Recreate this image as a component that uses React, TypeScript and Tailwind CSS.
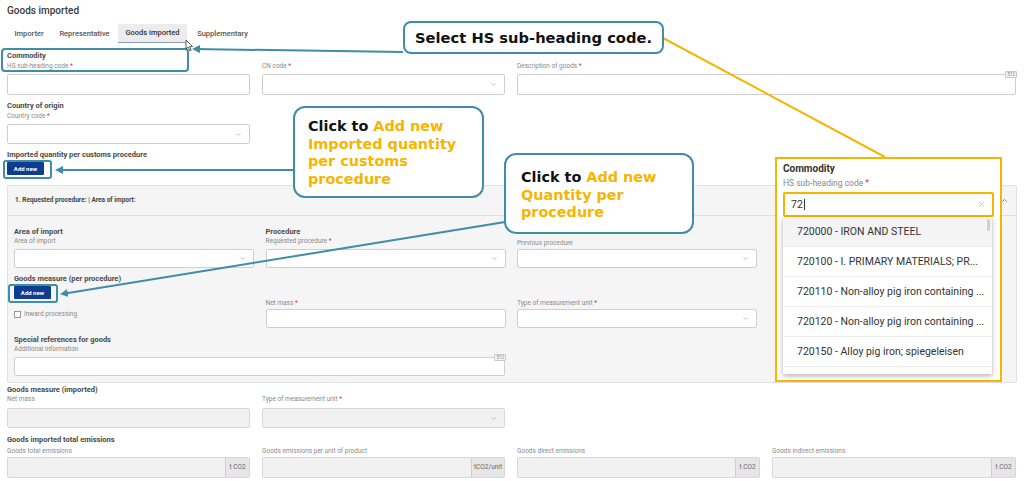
import React from "react";
import { ChevronDown, ChevronUp, X } from "lucide-react";

const Req = () => <span className="text-[#d43c3c]"> *</span>;

const Label = ({ children, req }: { children: React.ReactNode; req?: boolean }) => (
  <div className="h-[8px] text-[6.5px] leading-[8px] text-[#8a8a8a] whitespace-nowrap">
    {children}
    {req && <Req />}
  </div>
);

const Heading = ({ children }: { children: React.ReactNode }) => (
  <div className="h-[8px] text-[7.5px] leading-[8px] font-bold text-[#4a4a4a] whitespace-nowrap">{children}</div>
);

const Input = ({ h = "h-[21px]", disabled, badge }: { h?: string; disabled?: boolean; badge?: boolean }) => (
  <div
    className={`relative ${h} w-full rounded-[2px] border ${
      disabled ? "border-[#d8d8d8] bg-[#f1f1f1]" : "border-[#cfcfcf] bg-white"
    }`}
  >
    {badge && (
      <div className="absolute right-[-2px] top-[-4px] h-[7px] px-[1px] rounded-[1px] border border-[#c9c9c9] bg-[#f2f2f2] text-[4.5px] leading-[5px] text-[#888]">
        512
      </div>
    )}
  </div>
);

const Select = ({ h = "h-[21px]", disabled }: { h?: string; disabled?: boolean }) => (
  <div
    className={`flex ${h} w-full items-center justify-end rounded-[2px] border pr-[7px] ${
      disabled ? "border-[#d8d8d8] bg-[#f1f1f1]" : "border-[#cfcfcf] bg-white"
    }`}
  >
    <ChevronDown size={7} strokeWidth={2} color="#9a9a9a" />
  </div>
);

const Addon = ({ unit, w }: { unit: string; w: string }) => (
  <div className="flex h-[21px] w-full rounded-[2px] border border-[#d8d8d8] bg-[#f1f1f1]">
    <div className="flex-1" />
    <div
      className={`${w} flex items-center justify-center border-l border-[#cfcfcf] bg-[#e6e6e6] text-[6.5px] text-[#666] whitespace-nowrap`}
    >
      {unit}
    </div>
  </div>
);

const AddNew = () => (
  <div className="flex h-[13px] w-[37px] items-center justify-center rounded-[1px] bg-[#0d3d8f] text-[6px] font-bold text-white">
    Add new
  </div>
);

const Callout = ({ className, children }: { className: string; children: React.ReactNode }) => (
  <div
    className={`absolute border-2 border-[#3d8ea6] bg-white font-['DejaVu_Sans',sans-serif] font-bold text-[#111] ${className}`}
  >
    {children}
  </div>
);

const Y = ({ children }: { children: React.ReactNode }) => <span className="text-[#f7b500]">{children}</span>;

export default function App() {
  const items = [
    "720000 - IRON AND STEEL",
    "720100 - I. PRIMARY MATERIALS; PR...",
    "720110 - Non-alloy pig iron containing ...",
    "720120 - Non-alloy pig iron containing ...",
    "720150 - Alloy pig iron; spiegeleisen",
  ];
  return (
    <div className="relative h-[481px] w-[1024px] overflow-hidden bg-white font-['Roboto',sans-serif]">
      <div className="px-[7px] pt-[4px]">
        <div className="h-[12px] text-[10px] leading-[13px] font-medium text-[#3a3a3a]">Goods imported</div>

        {/* tabs */}
        <div className="mt-[8px] flex h-[19px] text-[7.5px] font-medium text-[#555]">
          <div className="flex w-[44px] items-center justify-center">Importer</div>
          <div className="flex w-[67px] items-center justify-center">Representative</div>
          <div className="flex w-[69px] items-center justify-center border-b border-[#8aa0b8] bg-[#ececec] text-[#333]">
            Goods imported
          </div>
          <div className="flex w-[71px] items-center justify-center">Supplementary</div>
        </div>

        {/* commodity */}
        <div className="mt-[9px]">
          <Heading>Commodity</Heading>
          <div className="mt-[2px] grid grid-cols-[243px_243px_243px_244px] gap-x-[12px]">
            <div>
              <Label req>HS sub-heading code</Label>
              <div className="mt-[4px]">
                <Input />
              </div>
            </div>
            <div>
              <Label req>CN code</Label>
              <div className="mt-[4px]">
                <Select />
              </div>
            </div>
            <div className="col-span-2">
              <Label req>Description of goods</Label>
              <div className="mt-[4px]">
                <Input badge />
              </div>
            </div>
          </div>
        </div>

        {/* country */}
        <div className="mt-[7px] w-[243px]">
          <Heading>Country of origin</Heading>
          <div className="mt-[2px]">
            <Label req>Country code</Label>
          </div>
          <div className="mt-[4px]">
            <Select h="h-[20px]" />
          </div>
        </div>

        <div className="mt-[7px]">
          <Heading>Imported quantity per customs procedure</Heading>
          <div className="mt-[3px]">
            <AddNew />
          </div>
        </div>

        {/* panel */}
        <div className="mt-[10px] w-[1010px] rounded-[2px] border border-[#e2e2e2] bg-[#f5f5f5]">
          <div className="flex h-[30px] items-center justify-between border-b border-[#dedede] pl-[7px] pr-[7px]">
            <div className="text-[6.5px] font-bold text-[#444]">1. Requested procedure: | Area of import:</div>
            <ChevronUp size={9} strokeWidth={2} color="#666" />
          </div>
          <div className="px-[6px] pb-[6px]">
            <div className="mt-[12px] grid grid-cols-[240px_240px_240px] gap-x-[11.5px]">
              <div>
                <Heading>Area of import</Heading>
                <div className="mt-[1px]">
                  <Label>Area of import</Label>
                </div>
                <div className="mt-[4px]">
                  <Select h="h-[19px]" />
                </div>
              </div>
              <div>
                <Heading>Procedure</Heading>
                <div className="mt-[1px]">
                  <Label req>Requested procedure</Label>
                </div>
                <div className="mt-[4px]">
                  <Select h="h-[19px]" />
                </div>
              </div>
              <div>
                <div className="h-[8px]" />
                <div className="mt-[3px]">
                  <Label>Previous procedure</Label>
                </div>
                <div className="mt-[2px]">
                  <Select h="h-[19px]" />
                </div>
              </div>
            </div>

            <div className="mt-[7px]">
              <Heading>Goods measure (per procedure)</Heading>
              <div className="mt-[3px]">
                <AddNew />
              </div>
            </div>

            <div className="grid grid-cols-[240px_240px_240px] gap-x-[11.5px]">
              <div className="mt-[12px] flex items-start gap-[3px]">
                <div className="h-[7px] w-[7px] border border-[#9a9a9a] bg-white" />
                <div className="text-[6.5px] leading-[7px] text-[#8a8a8a]">Inward processing</div>
              </div>
              <div>
                <Label req>Net mass</Label>
                <div className="mt-[2px]">
                  <Input h="h-[19px]" />
                </div>
              </div>
              <div>
                <Label req>Type of measurement unit</Label>
                <div className="mt-[2px]">
                  <Select h="h-[19px]" />
                </div>
              </div>
            </div>

            <div className="mt-[8px] w-[491px]">
              <Heading>Special references for goods</Heading>
              <div className="mt-[1px]">
                <Label>Additional information</Label>
              </div>
              <div className="mt-[4px]">
                <Input h="h-[19px]" badge />
              </div>
            </div>
          </div>
        </div>

        {/* goods measure imported */}
        <div className="mt-[3px]">
          <Heading>Goods measure (imported)</Heading>
          <div className="mt-[1px] grid grid-cols-[243px_243px] gap-x-[12px]">
            <div>
              <Label>Net mass</Label>
              <div className="mt-[5px]">
                <Input h="h-[20px]" disabled />
              </div>
            </div>
            <div>
              <Label req>Type of measurement unit</Label>
              <div className="mt-[5px]">
                <Select h="h-[20px]" disabled />
              </div>
            </div>
          </div>
        </div>

        <div className="mt-[8px]">
          <Heading>Goods imported total emissions</Heading>
          <div className="mt-[3px] grid grid-cols-[243px_243px_243px_244px] gap-x-[12px]">
            <div>
              <Label>Goods total emissions</Label>
              <div className="mt-[2px]">
                <Addon unit="t CO2" w="w-[24px]" />
              </div>
            </div>
            <div>
              <Label>Goods emissions per unit of product</Label>
              <div className="mt-[2px]">
                <Addon unit="tCO2/unit" w="w-[33px]" />
              </div>
            </div>
            <div>
              <Label>Goods direct emissions</Label>
              <div className="mt-[2px]">
                <Addon unit="t CO2" w="w-[24px]" />
              </div>
            </div>
            <div>
              <Label>Goods indirect emissions</Label>
              <div className="mt-[2px]">
                <Addon unit="t CO2" w="w-[24px]" />
              </div>
            </div>
          </div>
        </div>
      </div>

      {/* highlight boxes */}
      <div className="absolute left-[1px] top-[48px] h-[24px] w-[188px] rounded-[4px] border-2 border-[#3d8ea6]" />
      <div className="absolute left-[3px] top-[160px] h-[19px] w-[49px] rounded-[3px] border-2 border-[#3d8ea6]" />
      <div className="absolute left-[8px] top-[284px] h-[19px] w-[50px] rounded-[3px] border-2 border-[#3d8ea6]" />

      {/* cursor */}
      <svg className="absolute left-[185px] top-[39px]" width="9" height="13" viewBox="0 0 9 13">
        <path d="M1 1 L1 10 L3.2 8 L4.8 11.8 L6.2 11.2 L4.7 7.6 L7.6 7.6 Z" fill="#fff" stroke="#333" strokeWidth="0.8" />
      </svg>

      {/* lines */}
      <svg className="pointer-events-none absolute left-0 top-0" width="1024" height="481">
        <defs>
          <marker id="ah" markerWidth="8" markerHeight="8" refX="6" refY="4" orient="auto" markerUnits="userSpaceOnUse">
            <path d="M0 0 L8 4 L0 8 Z" fill="#3d8ea6" />
          </marker>
        </defs>
        <line x1="403" y1="52" x2="194" y2="49" stroke="#3d8ea6" strokeWidth="2" markerEnd="url(#ah)" />
        <line x1="293" y1="170" x2="57" y2="170" stroke="#3d8ea6" strokeWidth="2" markerEnd="url(#ah)" />
        <line x1="505" y1="222" x2="62" y2="294" stroke="#3d8ea6" strokeWidth="2" markerEnd="url(#ah)" />
        <line x1="663" y1="38" x2="885" y2="157" stroke="#f7b500" strokeWidth="2" />
      </svg>

      {/* callouts */}
      <Callout className="left-[403px] top-[21px] flex h-[33px] w-[261px] items-center justify-center rounded-[8px] pt-[2px] text-[14.7px]">
        Select HS sub-heading code.
      </Callout>
      <Callout className="left-[293px] top-[106px] h-[92px] w-[191px] rounded-[12px] pl-[13px] pt-[10px] text-[14.4px] leading-[17.5px]">
        Click to <Y>Add new</Y>
        <br />
        <Y>Imported quantity</Y>
        <br />
        <Y>per customs</Y>
        <br />
        <Y>procedure</Y>
      </Callout>
      <Callout className="left-[504px] top-[153px] h-[81px] w-[190px] rounded-[12px] pl-[15px] pt-[14px] text-[14.4px] leading-[17.5px]">
        Click to <Y>Add new</Y>
        <br />
        <Y>Quantity per</Y>
        <br />
        <Y>procedure</Y>
      </Callout>

      {/* zoomed commodity */}
      <div className="absolute left-[775px] top-[157px] h-[225px] w-[227px] border-2 border-[#f7b500] bg-white px-[6px] pt-[4px]">
        <div className="text-[10px] leading-[12px] font-bold text-[#333]">Commodity</div>
        <div className="mt-[3px] text-[8.5px] leading-[10px] text-[#888]">
          HS sub-heading code<span className="text-[#d43c3c]"> *</span>
        </div>
        <div className="mt-[4px] flex h-[25px] items-center justify-between rounded-[2px] border-2 border-[#f7b500] pl-[6px] pr-[6px]">
          <span className="text-[10.5px] text-[#333]">
            72<span className="ml-[1px] inline-block h-[11px] w-[1px] translate-y-[2px] bg-[#333]" />
          </span>
          <X size={9} strokeWidth={1.5} color="#aaa" />
        </div>
        <div className="relative h-[157px] w-[209px] overflow-hidden bg-white shadow-[0_2px_5px_rgba(0,0,0,0.3)]">
          <div className="absolute right-[2px] top-[2px] h-[12px] w-[3px] rounded-[2px] bg-[#cfcfcf]" />
          {items.map((t, i) => (
            <div
              key={t}
              className={`flex h-[30px] items-center overflow-hidden whitespace-nowrap border-b border-[#ececec] pl-[14px] text-[10.5px] text-[#333] ${
                i === 0 ? "bg-[#f4f4f4]" : "bg-white"
              }`}
            >
              {t}
            </div>
          ))}
        </div>
      </div>
    </div>
  );
}
